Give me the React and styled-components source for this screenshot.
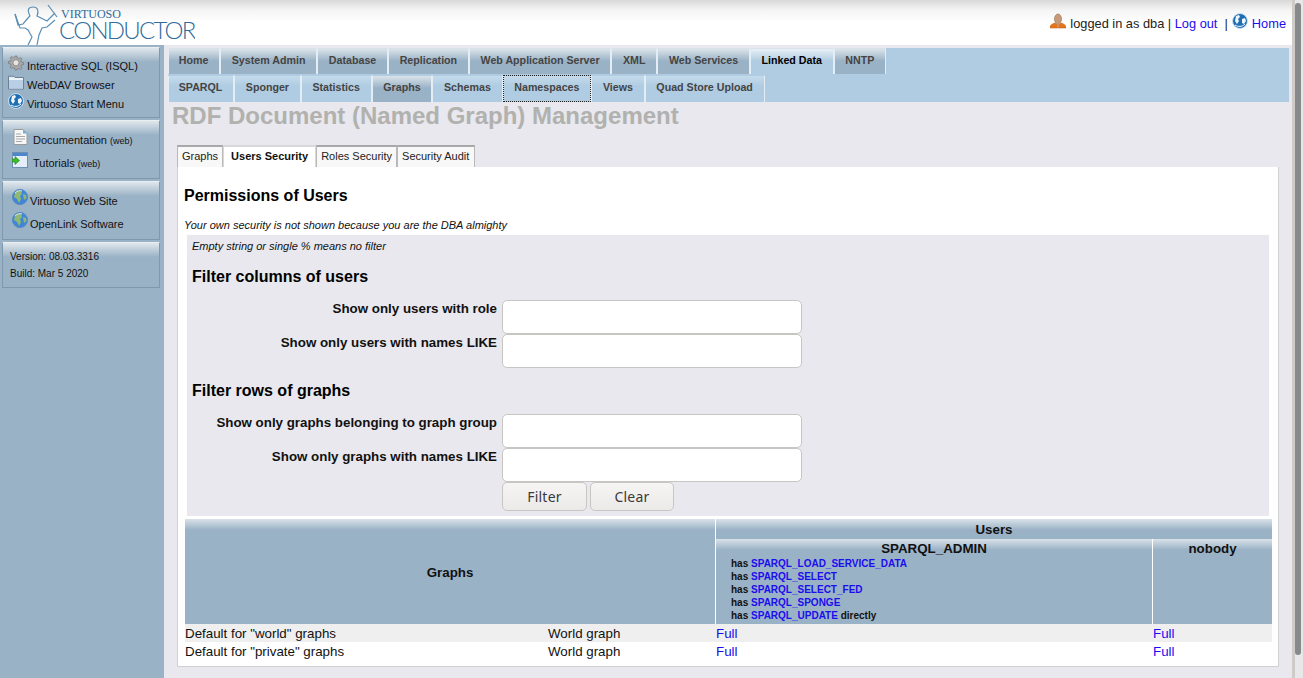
import React from 'react';
import styled, { createGlobalStyle } from 'styled-components';

const Global = createGlobalStyle`
  html, body { margin: 0; padding: 0; height: 678px; overflow: hidden; }
  body { font-family: "Liberation Sans", Arial, sans-serif; background: #e8e8ee; color: #111; }
  a { color: #1a0dee; text-decoration: none; }
`;

const Frame = styled.div`display: flex; width: 1303px; height: 678px; overflow: hidden;`;
const Page = styled.div`width: 1292px; flex: none; display: flex; flex-direction: column;`;
const Scroll = styled.div`
  width: 11px; flex: none; background: #e8e8ea; border-left: 3px solid #cfcbc8; box-sizing: border-box;
  padding: 3px 0 0 0;
`;
const Thumb = styled.div`width: 6px; height: 652px; background: #868a8a; border-radius: 3px;`;

const Header = styled.header`
  height: 45px; flex: none; display: flex; align-items: flex-start; justify-content: space-between;
  background: linear-gradient(#d8d8d8 0, #f4f4f4 10px, #fff 22px);
`;
const Logo = styled.div`display: flex; height: 45px; overflow: hidden; color: #2f6b9c;`;
const LogoFigure = styled.svg`flex: none; display: block;`;
const LogoText = styled.div`display: flex; flex-direction: column; margin-left: 1px; padding-top: 9px;`;
const LogoSmall = styled.span`font: 12px/10px "Liberation Serif", serif; height: 10px; white-space: nowrap;`;
const LogoBig = styled.span`font: 300 24px/18px Lato, sans-serif; letter-spacing: -1.75px; height: 18px; margin: 2px 0 0 -2px; white-space: nowrap;`;
const User = styled.div`display: flex; align-items: flex-start; gap: 4px; font-size: 12.8px; line-height: 15px; padding: 16px 6px 0 0; color: #222; white-space: pre;`;
const IconWrap = styled.span`display: inline-flex; margin-top: -3px;`;

const Body = styled.div`flex: 1; display: flex; min-height: 0;`;
const Side = styled.aside`
  width: 164px; flex: none; background: #9ab2c6; padding: 2px 4px 0 2px; box-sizing: border-box;
  display: flex; flex-direction: column; gap: 2px;
`;
const SideBox = styled.div`
  height: ${p => p.$h}px; box-sizing: border-box; padding: ${p => p.$pad || '0'};
  border: 1px solid #7f98ab; border-top: 1px solid #e8eef2;
  background: linear-gradient(#dfe7ec 0, #9ab2c6 14px);
  display: flex; flex-direction: column;
`;
const SideRow = styled.a`
  display: flex; align-items: flex-start; color: #111; font-size: 11px; line-height: 13px; height: ${p => p.$h || 19}px;
  white-space: pre; gap: ${p => p.$gap || 3}px;
`;
const SideIcon = styled.span`width: 16px; flex: none; display: flex; justify-content: center;`;
const SideText = styled.span`padding-top: ${p => p.$top || 5}px;`;
const Web = styled.span`font-size: 9px;`;
const Info = styled.div`font-size: 10px; line-height: 17px; color: #111; padding: 5px 0 0 7px;`;

const Main = styled.main`flex: 1; min-width: 0; display: flex; flex-direction: column; padding: 3px 3px 0 4px;`;
const Nav = styled.nav`background: #b0cce2; height: 54px; flex: none; display: flex; flex-direction: column; gap: 1px;`;
const NavRow = styled.div`display: flex; height: ${p => (p.$second ? 27 : 26)}px;`;
const NavTab = styled.a`
  display: flex; align-items: center; justify-content: center; box-sizing: border-box; height: 100%;
  padding: 0 10.72px 4px; font-size: 10.67px; font-weight: 700; white-space: nowrap;
  color: ${p => (p.$active ? '#000' : '#444')};
  border: 1px solid #e4edf4; border-top-color: ${p => (p.$second ? '#b0cce2' : '#d8e2ea')};
  border-bottom: 0;
  background: ${p =>
    p.$active ? 'linear-gradient(#e8f0f6 0, #b0cce2 12px)'
      : p.$grey ? 'linear-gradient(#dbe3e9 0, #9ab2c6 12px)'
      : 'linear-gradient(#c4dbec 0, #b0cce2 10px)'};
  ${p => p.$dotted && 'outline: 1px dotted #222; outline-offset: -1px;'}
  &:first-child { padding-left: 9.72px; }
`;
const Title = styled.h1`margin: 0 0 0 4px; font-size: 24px; line-height: 28px; font-weight: 700; color: #b1b1ae; white-space: nowrap;`;

const Tabs = styled.div`display: flex; margin: 15px 0 0 9px; height: 22px;`;
const Tab = styled.a`
  display: flex; align-items: center; box-sizing: border-box; padding: 0 ${p => p.$pr || 4}px 2px 4px; font-size: 11px; white-space: nowrap;
  color: #222; background: #f8f8f8; border: 1px solid #b9b9b9; border-top: 2px solid #a8a8a8; border-bottom: 0;
  ${p => p.$active && 'font-weight: 700; color: #111; background: #fff; border-color: #d8d8d8; padding: 0 7px 2px;'}
`;
const Panel = styled.section`
  width: 1102px; height: 500px; box-sizing: border-box; margin-left: 9px; background: #fff; border: 1px solid #d0d0d0; border-top: 0;
  padding: 19px 5px 0 6px;
`;
const H2 = styled.h2`margin: 0; font-size: 16px; line-height: 20px; font-weight: 700; color: #000;`;
const Note = styled.div`font-size: 11px; line-height: 14px; font-style: italic; margin-top: ${p => p.$mt ?? 12}px;`;
const Filters = styled.div`margin: 3px 4px 0 3px; height: 281px; background: #e8e8ee; padding: 4px 0 0 5px; box-sizing: border-box;`;
const H3 = styled.h3`margin: ${p => p.$mt}px 0 0; font-size: 16px; line-height: 20px; font-weight: 700; color: #000;`;
const FormGrid = styled.div`display: grid; grid-template-columns: 305px 300px; column-gap: 5px; row-gap: 0; margin-top: ${p => p.$mt}px;`;
const Label = styled.label`font-size: 13.33px; line-height: 15px; font-weight: 700; text-align: right; padding-top: 1px; color: #111; white-space: nowrap;`;
const Input = styled.input`
  width: 300px; height: 34px; box-sizing: border-box; background: #fff; border: 1px solid #c8c6c2; border-radius: 5px; display: block; padding: 0 8px;
`;
const Buttons = styled.div`display: flex; gap: 3px; grid-column: 2;`;
const Button = styled.button`
  width: ${p => p.$w}px; height: 29px; box-sizing: border-box; padding: 0; border: 1px solid #c8c6c2; border-radius: 5px;
  background: linear-gradient(#f6f5f4, #eceae8); color: #3a3a3a; font: 14px/1 "Noto Sans", sans-serif; letter-spacing: 0.2px;
`;
const Table = styled.table`
  border-collapse: separate; border-spacing: 0; width: 1087px; margin: 3px 0 0 1px; table-layout: fixed;
`;
const Th = styled.th`
  box-sizing: border-box;
  background: linear-gradient(#d9e2e8 0, #9ab2c6 11px); color: #111; padding: ${p => p.$pt || 0}px 0 0; font-size: 13.33px; line-height: ${p => (p.$pt ? 18 : 20)}px; font-weight: 700;
  vertical-align: ${p => (p.$top ? 'top' : 'middle')};
  ${p => p.$line && 'border-left: 1px solid #fff;'}
  height: ${p => p.$h || 'auto'};
`;
const Roles = styled.div`text-align: left; padding: 0 0 2px 15px; font-size: 10px; line-height: 13px; margin-top: -2px; font-weight: 700;`;
const Plain = styled.span`color: #111;`;
const Td = styled.td`box-sizing: border-box; padding: 1px 0 0 ${p => p.$pl || 0}px; height: 18px; line-height: 17px; font-size: 13.33px; color: #111; background: ${p => (p.$shade ? '#efefef' : '#fff')}; white-space: nowrap;`;

const Gear = () => (
  <svg width="16" height="16" viewBox="0 0 16 16">
    <g fill="#a8a8a8" stroke="#6f6f6f" strokeWidth=".6">
      <path d="M7 1h2l.4 2 1.5.6 1.7-1.1 1.4 1.4-1.1 1.7.6 1.5 2 .4v2l-2 .4-.6 1.5 1.1 1.7-1.4 1.4-1.7-1.1-1.5.6L9 15H7l-.4-2-1.5-.6-1.7 1.1L2 12.1l1.1-1.7-.6-1.5-2-.4V6.500l2-.4.6-1.500L2 2.900 3.400 1.500l1.700 1.100 1.500-.6z" />
      <circle cx="8" cy="7.800" r="3" fill="#e6e6e6" />
    </g>
  </svg>
);
const Folder = () => (
  <svg width="16" height="15" viewBox="0 0 16 15" style={{ marginTop: 1 }}>
    <path d="M.5 3V1.200h5.500l1 1.300h8.500V14H.5z" fill="#dbe8f5" stroke="#6d7f95" />
    <path d="M1 5h14v8.500H1z" fill="#b9cfe6" />
    <path d="M1 4h14" stroke="#fff" />
  </svg>
);
const Globe = () => (
  <svg width="16" height="16" viewBox="0 0 16 16">
    <circle cx="8" cy="8" r="7.500" fill="#1f6fb4" stroke="#cfe2f0" />
    <path d="M4 3l3-1 1 2-2 2 1 2-2 3-2-3zM10 6l3-1 1 3-2 3-2-1z" fill="#eef6fb" />
    <path d="M3 12c3 2 7 2 10-1" stroke="#fff" fill="none" />
  </svg>
);
const Earth = () => (
  <svg width="16" height="16" viewBox="0 0 16 16">
    <circle cx="8" cy="8" r="7.600" fill="#3f86d8" stroke="#5a8ac0" />
    <path d="M5 1.500l4 .5 1 3-2 2 1 3-2 4-2-4-3-2 1-4zM11 5l3 1 .6 3-2.600 2z" fill="#8fb873" />
    <path d="M3 4c2-2 5-3 7-2" stroke="#d8ecff" fill="none" />
  </svg>
);
const Doc = () => (
  <svg width="15" height="16" viewBox="0 0 15 16">
    <path d="M1 .5h9l4 4v11H1z" fill="#f6f6f6" stroke="#9a9a9a" />
    <path d="M10 .5v4h4z" fill="#6ab0e0" />
    <path d="M3 5h5M3 7.500h9M3 10h9M3 12.500h6" stroke="#a8a8a8" />
  </svg>
);
const Tutorial = () => (
  <svg width="16" height="16" viewBox="0 0 16 16">
    <rect x=".5" y=".5" width="15" height="15" fill="#e4eef8" stroke="#6d8fb5" />
    <rect x="1" y="1" width="14" height="3" fill="#4d86cc" />
    <path d="M0 7h3V4.500L7.500 8.500 3 12.500V10H0z" fill="#38c025" stroke="#1d7a14" strokeWidth=".6" />
  </svg>
);
const Person = () => (
  <svg width="16" height="16" viewBox="0 0 16 16">
    <path d="M0 15c0-3.500 3-4.500 5-5l3 2 3-2c2 .5 5 1.500 5 5z" fill="#e8751a" stroke="#b55a10" strokeWidth=".5" />
    <ellipse cx="8" cy="6" rx="3.500" ry="5" fill="#c99a78" stroke="#96704f" strokeWidth=".6" />
    <path d="M7.500 10.500h1l.4 4h-1.800z" fill="#c99a78" />
  </svg>
);

const row1 = [['Home'], ['System Admin'], ['Database'], ['Replication'], ['Web Application Server'], ['XML'], ['Web Services'], ['Linked Data', true], ['NNTP']];
const row2 = [['SPARQL'], ['Sponger'], ['Statistics'], ['Graphs', 'grey'], ['Schemas'], ['Namespaces', 'dotted'], ['Views'], ['Quad Store Upload']];

export default function App() {
  return (
    <Frame>
      <Global />
      <Page>
        <Header>
          <Logo>
            <LogoFigure width="60" height="45" viewBox="0 0 60 45" fill="none" stroke="#5b8fb6" strokeWidth="1.200">
              <path d="M15 14l3 11 5-1 5-6 2-2c-3-6-2-9 3-9s6 4 4 9l10 5 8-8" />
              <path d="M48 5l9 12" />
              <path d="M55 20l-8 7-5 1-3 7-2 10" />
              <path d="M15 14l5 14h5l3 2 4 7-4 8" />
            </LogoFigure>
            <LogoText>
              <LogoSmall>VIRTUOSO</LogoSmall>
              <LogoBig>CONDUCTOR</LogoBig>
            </LogoText>
          </Logo>
          <User>
            <IconWrap><Person /></IconWrap>
            <span>logged in as dba | <a href="#a">Log out</a>  |</span>
            <IconWrap><Globe /></IconWrap>
            <a href="#b">Home</a>
          </User>
        </Header>
        <Body>
          <Side>
            <SideBox $h={71} $pad="7px 0 0 5px">
              <SideRow><SideIcon><Gear /></SideIcon><SideText>Interactive SQL (ISQL)</SideText></SideRow>
              <SideRow><SideIcon><Folder /></SideIcon><SideText>WebDAV Browser</SideText></SideRow>
              <SideRow><SideIcon><Globe /></SideIcon><SideText>Virtuoso Start Menu</SideText></SideRow>
            </SideBox>
            <SideBox $h={59} $pad="8px 0 0 9px">
              <SideRow $h={23} $gap={5}><SideIcon><Doc /></SideIcon><SideText><span>Documentation </span><Web>(web)</Web></SideText></SideRow>
              <SideRow $h={23} $gap={5}><SideIcon><Tutorial /></SideIcon><SideText><span>Tutorials </span><Web>(web)</Web></SideText></SideRow>
            </SideBox>
            <SideBox $h={59} $pad="7px 0 0 9px">
              <SideRow $h={23} $gap={2}><SideIcon><Earth /></SideIcon><SideText $top={6}>Virtuoso Web Site</SideText></SideRow>
              <SideRow $h={23} $gap={2}><SideIcon><Earth /></SideIcon><SideText $top={6}>OpenLink Software</SideText></SideRow>
            </SideBox>
            <SideBox $h={46}>
              <Info>Version: 08.03.3316<br />Build: Mar 5 2020</Info>
            </SideBox>
          </Side>
          <Main>
            <Nav>
              <NavRow>
                {row1.map(([t, a]) => <NavTab key={t} $grey={!a} $active={a}>{t}</NavTab>)}
              </NavRow>
              <NavRow $second>
                {row2.map(([t, k]) => <NavTab key={t} $second $grey={k === 'grey'} $dotted={k === 'dotted'}>{t}</NavTab>)}
              </NavRow>
            </Nav>
            <Title>RDF Document (Named Graph) Management</Title>
            <Tabs>
              <Tab>Graphs</Tab>
              <Tab $active>Users Security</Tab>
              <Tab>Roles Security</Tab>
              <Tab $pr={5}>Security Audit</Tab>
            </Tabs>
            <Panel>
              <H2>Permissions of Users</H2>
              <Note>Your own security is not shown because you are the DBA almighty</Note>
              <Filters>
                <Note $mt={0}>Empty string or single % means no filter</Note>
                <H3 $mt={14}>Filter columns of users</H3>
                <FormGrid $mt={13}>
                  <Label>Show only users with role</Label><Input />
                  <Label>Show only users with names LIKE</Label><Input />
                </FormGrid>
                <H3 $mt={13}>Filter rows of graphs</H3>
                <FormGrid $mt={13}>
                  <Label>Show only graphs belonging to graph group</Label><Input />
                  <Label>Show only graphs with names LIKE</Label><Input />
                  <Buttons><Button $w={85}>Filter</Button><Button $w={84}>Clear</Button></Buttons>
                </FormGrid>
              </Filters>
              <Table>
                <colgroup><col style={{ width: 363 }} /><col style={{ width: 167 }} /><col style={{ width: 437 }} /><col style={{ width: 120 }} /></colgroup>
                <thead>
                  <tr>
                    <Th colSpan={2} rowSpan={2} $pt={2}>Graphs</Th>
                    <Th colSpan={2} $line $h="20px" $pt={2}>Users</Th>
                  </tr>
                  <tr>
                    <Th $line $top>
                      SPARQL_ADMIN
                      <Roles>
                        <div>has <a href="#1">SPARQL_LOAD_SERVICE_DATA</a></div>
                        <div>has <a href="#2">SPARQL_SELECT</a></div>
                        <div>has <a href="#3">SPARQL_SELECT_FED</a></div>
                        <div>has <a href="#4">SPARQL_SPONGE</a></div>
                        <div>has <a href="#5">SPARQL_UPDATE</a> <Plain>directly</Plain></div>
                      </Roles>
                    </Th>
                    <Th $line $top>nobody</Th>
                  </tr>
                </thead>
                <tbody>
                  <tr>
                    <Td $shade>Default for "world" graphs</Td><Td $shade>World graph</Td>
                    <Td $shade $pl={1}><a href="#6">Full</a></Td><Td $shade $pl={1}><a href="#7">Full</a></Td>
                  </tr>
                  <tr>
                    <Td>Default for "private" graphs</Td><Td>World graph</Td>
                    <Td $pl={1}><a href="#8">Full</a></Td><Td $pl={1}><a href="#9">Full</a></Td>
                  </tr>
                </tbody>
              </Table>
            </Panel>
          </Main>
        </Body>
      </Page>
      <Scroll><Thumb /></Scroll>
    </Frame>
  );
}
